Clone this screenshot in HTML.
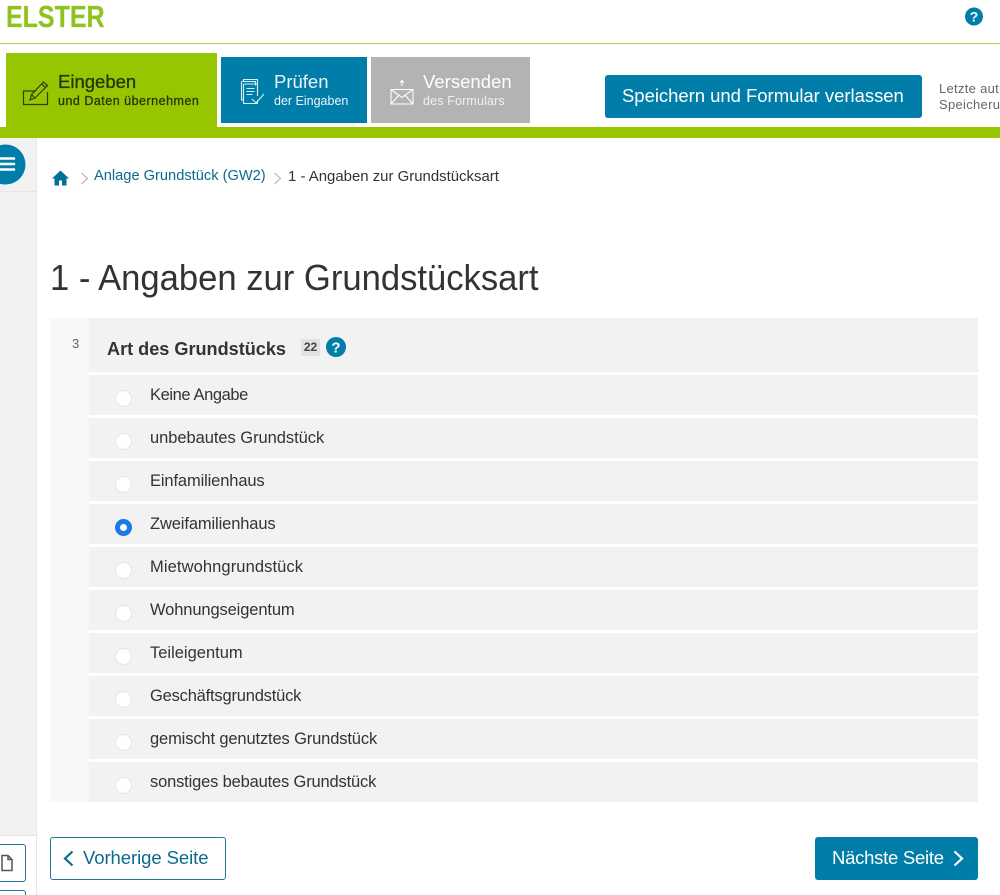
<!DOCTYPE html>
<html lang="de"><head><meta charset="utf-8"><title>ELSTER</title>
<style>
html,body{margin:0;padding:0;background:#fff;width:1000px;height:895px;overflow:hidden}
#p{width:1000px;height:895px;overflow:hidden;position:relative;font-family:"Liberation Sans",sans-serif;color:#333}
.a{position:absolute;white-space:nowrap}
.row{position:absolute;left:89px;width:889px;height:40px;background:#f2f2f2}
.radio{position:absolute;left:115px;width:17px;height:17px;border-radius:50%;background:#fff;box-shadow:inset 0 0 0 1px #e4e4e4}
.lbl{position:absolute;left:150px;font-size:16.5px;line-height:20px;color:#333;white-space:nowrap}
</style></head><body><div id="p">
<div class="a" style="left:6px;top:-1px;font-size:31px;line-height:36px;font-weight:700;color:#8fc31f;transform:scaleX(.806);transform-origin:0 0;-webkit-text-stroke:.2px #8fc31f">ELSTER</div>
<svg class="a" style="left:965px;top:7px" width="18" height="19" viewBox="0 0 18 18"><circle cx="9" cy="9" r="9" fill="#007da8"/><text x="9" y="14" font-family="Liberation Sans" font-size="14" font-weight="700" text-anchor="middle" fill="#fff">?</text></svg>
<div class="a" style="left:0;top:43px;width:1000px;height:1px;background:#b5cf50"></div>

<div class="a" style="left:6px;top:53px;width:211px;height:74px;background:#95c600"></div>
<div class="a" style="left:0;top:127px;width:1000px;height:11px;background:#95c600"></div>
<svg class="a" style="left:22px;top:79px" width="28" height="27" viewBox="0 0 28 27" fill="none" stroke="#2f3d10" stroke-width="1.200"><path d="M14 12H1.500v13.500h24V13"/><path d="M8 21l1.500-5.500L21.500 3l4 3.500L13 19z"/><path d="M19.500 5l4 3.500M9.500 15.500L13 19"/></svg>
<div class="a" style="left:58px;top:71px;font-size:18.500px;line-height:22px;font-weight:400;color:#26330a;-webkit-text-stroke:.3px #26330a">Eingeben</div>
<div class="a" style="left:58px;top:93px;font-size:12.500px;line-height:16px;letter-spacing:.5px;color:#26330a;-webkit-text-stroke:.25px #26330a">und Daten übernehmen</div>

<div class="a" style="left:221px;top:57px;width:146px;height:66px;background:#007da8"></div>
<svg class="a" style="left:239px;top:78px" width="28" height="28" viewBox="0 0 28 28" fill="none" stroke="#d8edf4" stroke-width="1.100"><path d="M4.500 3.500V1.500h14v13"/><path d="M2.500 3.500h14v4M2.500 3.500V22h2"/><path d="M4.500 6h14v12M4.500 6v19.500h14V22"/><path d="M7.500 10.500h8M7.500 13.500h8M7.500 16.500h6"/><path d="M13 21l4 4 8-9"/></svg>
<div class="a" style="left:274px;top:71px;font-size:18.500px;line-height:22px;color:#eaf5f9">Prüfen</div>
<div class="a" style="left:274px;top:93px;font-size:12.500px;line-height:16px;color:#eaf5f9">der Eingaben</div>

<div class="a" style="left:371px;top:57px;width:159px;height:66px;background:#b3b3b3"></div>
<svg class="a" style="left:390px;top:77px" width="25" height="28" viewBox="0 0 25 28" fill="none" stroke="#fff" stroke-width="1.100"><path d="M1 12.500h22v14.500H1z"/><path d="M1 12.500l11 8 11-8M1 27l8-9M23 27l-8-9"/><path d="M12 9V3.500M10 5.500l2-2 2 2"/></svg>
<div class="a" style="left:423px;top:71px;font-size:18.500px;line-height:22px;color:#fff;letter-spacing:.02px">Versenden</div>
<div class="a" style="left:423px;top:93px;font-size:12.500px;line-height:16px;color:#f0f0f0;letter-spacing:.15px">des Formulars</div>

<div class="a" style="left:605px;top:75px;width:317px;height:43px;background:#007da8;border-radius:3px"></div>
<div class="a" style="left:622px;top:85px;font-size:18.500px;line-height:22px;color:#fff;letter-spacing:-.03px">Speichern und Formular verlassen</div>
<div class="a" style="left:939px;top:81px;font-size:13px;line-height:16px;color:#666;letter-spacing:.3px">Letzte aut<br>Speicheru</div>

<div class="a" style="left:0;top:138px;width:36px;height:757px;background:#f2f2f2;border-right:1px solid #e6e6e6"></div>
<div class="a" style="left:0;top:191px;width:36px;height:1px;background:#e6e6e6"></div>
<div class="a" style="left:0;top:835px;width:36px;height:60px;background:#fff;border-top:1px solid #e3e3e3;border-right:1px solid #e6e6e6"></div>
<svg class="a" style="left:-15px;top:144px" width="41" height="41" viewBox="0 0 41 41"><circle cx="20.500" cy="20.500" r="20" fill="#007da8"/><path d="M12 14.500h17M12 20h17M12 25.500h17" stroke="#fff" stroke-width="2.500" stroke-linecap="round"/></svg>
<div class="a" style="left:-6px;top:844px;width:30px;height:36px;border:1px solid #1f7a9a;border-radius:3px;background:#fff"></div>
<svg class="a" style="left:0;top:854px" width="14" height="18" viewBox="0 0 14 18" fill="none" stroke="#555" stroke-width="1.500"><path d="M2 1.500h6l4 4v11H2zM8 1.500v4h4"/></svg>
<div class="a" style="left:-6px;top:890px;width:30px;height:36px;border:1px solid #1f7a9a;border-radius:3px;background:#fff"></div>

<svg class="a" style="left:52px;top:170px" width="17" height="16" viewBox="0 0 17 16"><path d="M8.500 0.500L0 8.500h2.500V15.500H7V10.500h3V15.500h4.500V8.500H17z" fill="#00709a"/></svg>
<svg class="a" style="left:80px;top:172px" width="9" height="13" viewBox="0 0 9 13" fill="none" stroke="#aaa" stroke-width="1"><path d="M1.500 1l6 5.500-6 5.500"/></svg>
<div class="a" style="left:94px;top:167px;font-size:14.650px;line-height:19px;color:#0b6a8c">Anlage Grundstück (GW2)</div>
<svg class="a" style="left:273px;top:172px" width="9" height="13" viewBox="0 0 9 13" fill="none" stroke="#aaa" stroke-width="1"><path d="M1.500 1l6 5.500-6 5.500"/></svg>
<div class="a" style="left:288px;top:167px;font-size:14.950px;line-height:19px;color:#333">1 - Angaben zur Grundstücksart</div>

<div class="a" style="left:50px;top:256px;font-size:36.500px;line-height:44px;color:#333;transform:scaleX(.948);transform-origin:0 0">1 - Angaben zur Grundstücksart</div>

<div class="a" style="left:50px;top:318px;width:39px;height:484px;background:#f8f8f8"></div>
<div class="a" style="left:72px;top:336px;font-size:13px;line-height:16px;color:#666">3</div>
<div class="a" style="left:89px;top:318px;width:889px;height:54px;background:#f2f2f2"></div>
<div class="a" style="left:107px;top:338px;font-size:18.100px;line-height:22px;font-weight:700;color:#333">Art des Grundstücks</div>
<div class="a" style="left:301px;top:339px;width:19px;height:17px;background:#e2e2e2;font-size:12px;line-height:17px;font-weight:700;text-align:center;color:#444">22</div>
<svg class="a" style="left:326px;top:337px" width="20" height="20" viewBox="0 0 20 20"><circle cx="10" cy="10" r="10" fill="#007da8"/><text x="10" y="15.500" font-family="Liberation Sans" font-size="15" font-weight="700" text-anchor="middle" fill="#fff">?</text></svg>

<div class="row" style="top:375px"></div><div class="radio" style="top:390px"></div><div class="lbl" style="top:385px;letter-spacing:-.4px">Keine Angabe</div>
<div class="row" style="top:418px"></div><div class="radio" style="top:433px"></div><div class="lbl" style="top:428px;letter-spacing:-.05px">unbebautes Grundstück</div>
<div class="row" style="top:461px"></div><div class="radio" style="top:476px"></div><div class="lbl" style="top:471px;letter-spacing:-.13px">Einfamilienhaus</div>
<div class="row" style="top:504px"></div><div class="radio" style="top:519px;background:#1a7be0;box-shadow:none"></div><div class="a" style="left:120px;top:524px;width:7px;height:7px;border-radius:50%;background:#fff"></div><div class="lbl" style="top:514px;letter-spacing:-.12px">Zweifamilienhaus</div>
<div class="row" style="top:547px"></div><div class="radio" style="top:562px"></div><div class="lbl" style="top:557px;letter-spacing:.1px">Mietwohngrundstück</div>
<div class="row" style="top:590px"></div><div class="radio" style="top:605px"></div><div class="lbl" style="top:600px;letter-spacing:-.12px">Wohnungseigentum</div>
<div class="row" style="top:633px"></div><div class="radio" style="top:648px"></div><div class="lbl" style="top:643px">Teileigentum</div>
<div class="row" style="top:676px"></div><div class="radio" style="top:691px"></div><div class="lbl" style="top:686px;letter-spacing:-.2px">Geschäftsgrundstück</div>
<div class="row" style="top:719px"></div><div class="radio" style="top:734px"></div><div class="lbl" style="top:729px;letter-spacing:-.14px">gemischt genutztes Grundstück</div>
<div class="row" style="top:762px"></div><div class="radio" style="top:777px"></div><div class="lbl" style="top:772px;letter-spacing:-.17px">sonstiges bebautes Grundstück</div>

<div class="a" style="left:50px;top:837px;width:174px;height:41px;border:1px solid #1f7a9a;border-radius:3px;background:#fff"></div>
<svg class="a" style="left:62px;top:850px" width="13" height="17" viewBox="0 0 13 17" fill="none" stroke="#0b6a8c" stroke-width="2.200"><path d="M10.500 1.500L3 8.500l7.500 7"/></svg>
<div class="a" style="left:83px;top:847px;font-size:18.500px;line-height:22px;color:#0b6a8c;letter-spacing:-.07px">Vorherige Seite</div>

<div class="a" style="left:815px;top:837px;width:163px;height:43px;background:#007da8;border-radius:3px"></div>
<div class="a" style="left:832px;top:847px;font-size:18.500px;line-height:22px;color:#fff;letter-spacing:-.26px">Nächste Seite</div>
<svg class="a" style="left:952px;top:850px" width="13" height="17" viewBox="0 0 13 17" fill="none" stroke="#fff" stroke-width="2.200"><path d="M2.500 1.500L10 8.500l-7.500 7"/></svg>
</div></body></html>
